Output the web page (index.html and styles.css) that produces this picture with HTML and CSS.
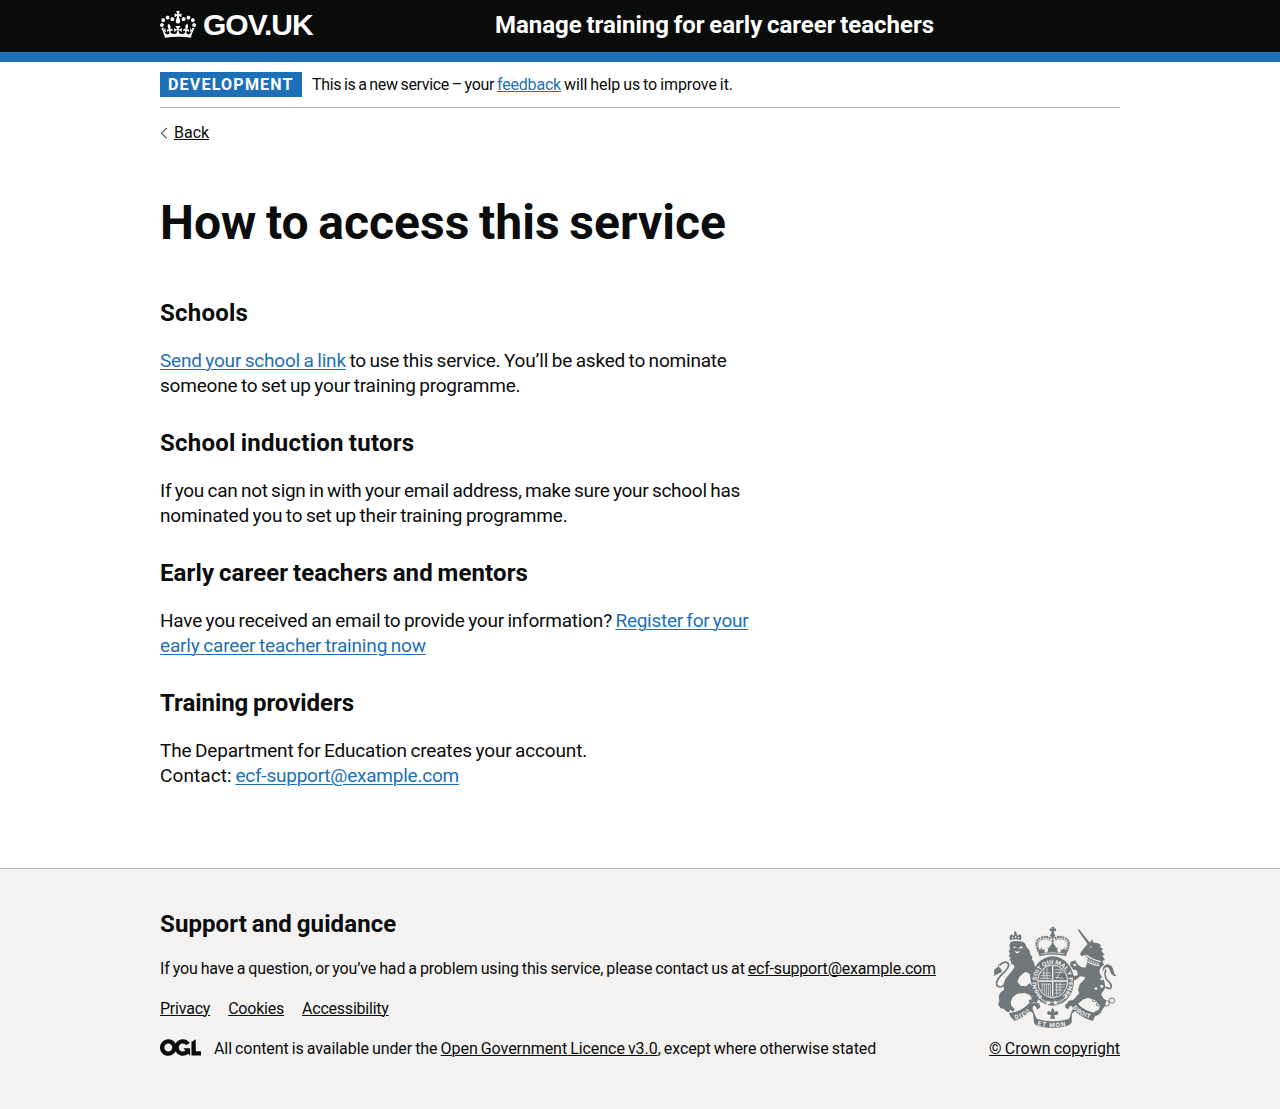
FILE: index.html
```html
<!DOCTYPE html>
<html lang="en">
<head>
<meta charset="utf-8">
<title>How to access this service</title>
<link rel="stylesheet" href="styles.css">
</head>
<body>
<header class="header">
  <div class="container header-inner">
    <a class="logo" href="#">
      <svg class="crown" viewBox="0 0 132 97" preserveAspectRatio="none" aria-hidden="true"><path fill="currentColor" fill-rule="evenodd" d="M25 30.2c3.5 1.5 7.7-.2 9.1-3.7 1.5-3.6-.2-7.8-3.9-9.2-3.6-1.4-7.6.3-9.1 3.9-1.4 3.5.3 7.5 3.9 9zM9 39.5c3.6 1.5 7.8-.2 9.2-3.7 1.5-3.6-.2-7.8-3.9-9.1-3.6-1.5-7.6.2-9.1 3.8-1.4 3.5.3 7.5 3.8 9zM4.4 57.2c3.5 1.5 7.7-.2 9.1-3.8 1.5-3.6-.2-7.7-3.9-9.1-3.5-1.5-7.6.3-9.1 3.8-1.4 3.5.3 7.6 3.9 9.1zm38.3-21.4c3.5 1.5 7.7-.2 9.1-3.8 1.5-3.6-.2-7.7-3.9-9.1-3.6-1.5-7.6.3-9.1 3.8-1.3 3.6.4 7.7 3.9 9.1zm64.4-5.6c-3.6 1.5-7.8-.2-9.1-3.7-1.5-3.6.2-7.8 3.8-9.2 3.6-1.4 7.7.3 9.2 3.9 1.3 3.5-.4 7.5-3.9 9zm15.9 9.3c-3.6 1.5-7.7-.2-9.1-3.7-1.5-3.6.2-7.8 3.7-9.1 3.6-1.5 7.7.2 9.2 3.8 1.5 3.5-.3 7.5-3.8 9zm4.7 17.7c-3.6 1.5-7.8-.2-9.2-3.8-1.5-3.6.2-7.7 3.9-9.1 3.6-1.5 7.7.3 9.2 3.8 1.3 3.5-.4 7.6-3.9 9.1zM89.3 35.8c-3.6 1.5-7.8-.2-9.2-3.8-1.4-3.6.2-7.7 3.9-9.1 3.6-1.5 7.7.3 9.2 3.8 1.4 3.6-.3 7.7-3.9 9.1zM69.7 17.7l8.9 4.7V9.3l-8.9 2.8c-.2-.3-.5-.6-.9-.9L72.4 0H59.6l3.5 11.2c-.3.3-.6.5-.9.9l-8.8-2.8v13.1l8.8-4.7c.3.3.6.7.9.9l-5 15.4v.1c-.2.8-.4 1.6-.4 2.4 0 4.1 3.1 7.5 7 8.1h.2c.3 0 .7.1 1 .1.4 0 .7 0 1-.1h.2c4-.6 7.1-4.1 7.1-8.1 0-.8-.1-1.7-.4-2.4V34l-5.1-15.4c.4-.2.7-.6 1-.9zM66 92.8c16.9 0 32.8 1.1 47.1 3.2 4-16.9 8.9-26.7 14-33.5l-9.6-3.4c1 4.9 1.1 7.2 0 10.2-1.5-1.4-3-4.3-4.2-8.7L108.6 76c2.8-2 5-3.2 7.5-3.3-4.4 9.4-10 11.9-13.6 11.2-4.3-.8-6.3-4.6-5.6-7.9 1-4.7 5.7-5.9 8-.5 4.3-8.7-3-11.4-7.6-8.8 7.1-7.2 7.9-13.5 2.1-21.1-8 6.1-8.1 12.3-4.5 20.8-4.7-5.4-12.1-2.5-9.5 6.2 3.4-5.2 7.9-2 7.2 3.1-.6 4.3-6.4 7.8-13.5 7.2-10.3-.9-10.9-8-11.2-13.8 2.5-.5 7.1 1.8 11 7.3L80.2 60c-4.1 4.4-8 5.3-12.3 5.4 1.4-4.4 8-11.6 8-11.6H55.5s6.4 7.2 7.9 11.6c-4.2-.1-8-1-12.3-5.4l1.4 16.4c3.9-5.5 8.5-7.7 10.9-7.3-.3 5.8-.9 12.8-11.1 13.8-7.2.6-12.9-2.9-13.5-7.2-.7-5 3.8-8.3 7.1-3.1 2.7-8.7-4.6-11.6-9.4-6.2 3.7-8.5 3.6-14.7-4.6-20.8-5.8 7.6-5 13.9 2.2 21.1-4.7-2.6-11.9.1-7.7 8.8 2.3-5.5 7.1-4.2 8.1.5.7 3.3-1.3 7.1-5.7 7.9-3.5.7-9-1.8-13.5-11.2 2.5.1 4.7 1.3 7.5 3.3l-4.7-15.4c-1.2 4.4-2.7 7.2-4.3 8.7-1.1-3-.9-5.3 0-10.2l-9.5 3.4c5 6.9 9.9 16.7 14 33.5 14.8-2.1 30.8-3.2 47.7-3.2z"/></svg>
      <span class="logo-text">GOV.UK</span>
    </a>
    <a class="service-name" href="#">Manage training for early career teachers</a>
  </div>
</header>

<div class="container page">
  <div class="phase-banner">
    <strong class="tag">DEVELOPMENT</strong>
    <span class="phase-text"><span class="phase-lead">This is a new service – your</span> <a href="#" class="snug">feedback</a> <span class="phase-end">will help us to improve it.</span></span>
  </div>
  <div class="back"><svg class="chevron" viewBox="0 0 8 12" aria-hidden="true"><path d="M6.8 1 1.6 6.2l5.2 5.2" fill="none" stroke="currentColor" stroke-width="1.2"/></svg><a href="#">Back</a></div>

  <main class="content">
    <h1>How to access this service</h1>

    <h2 class="wide">Schools</h2>
    <p><a href="#">Send your school a link</a> to use this service. You’ll be asked to nominate someone to set up your training programme.</p>

    <h2 class="wider">School induction tutors</h2>
    <p><span class="tight">If you can not sign in with your email address, make sure your school has</span> <span class="loose">nominated you to set up their training programme.</span></p>

    <h2>Early career teachers and mentors</h2>
    <p><span class="snug">Have you received an email to provide your information?</span> <a href="#" class="loose"><span class="tight">Register for your</span> early career teacher training now</a></p>

    <h2 class="narrow">Training providers</h2>
    <p class="loose">The Department for Education creates your account.<br><span class="open">Contact:</span> <a href="#" class="email">ecf-support@example.com</a></p>
  </main>
</div>

<footer class="footer">
  <div class="container footer-inner">
    <div class="footer-main">
      <h2>Support and guidance</h2>
      <p>If you have a question, or you’ve had a problem using this service, please contact us at <a href="#" class="snug">ecf-support@example.com</a></p>
      <ul class="footer-links">
        <li><a href="#">Privacy</a></li>
        <li><a href="#">Cookies</a></li>
        <li><a href="#">Accessibility</a></li>
      </ul>
      <div class="licence">
        <svg class="ogl" viewBox="0 0 483.2 195.7" aria-hidden="true"><path fill="currentColor" d="M421.5 142.8V.1l-50.7 32.3v161.1h112.4v-50.7zm-122.3-9.6A47.12 47.12 0 0 1 221 97.8c0-26 21.1-47.1 47.1-47.1 16.7 0 31.4 8.7 39.7 21.8l42.7-27.2A97.63 97.63 0 0 0 268.1 0c-36.5 0-68.3 20.1-85.1 49.7A98 98 0 0 0 97.8 0C43.9 0 0 43.9 0 97.8s43.9 97.8 97.8 97.8c36.5 0 68.3-20.1 85.1-49.7a97.76 97.76 0 0 0 149.6 25.4l19.4 22.2h3v-87.8h-80l24.3 27.5zM97.8 145c-26 0-47.1-21.1-47.1-47.1s21.1-47.1 47.1-47.1 47.1 21.1 47.1 47.1S123.8 145 97.8 145"/></svg>
        <span>All content is available under the <a href="#" class="licence-name">Open Government Licence v3.0</a>, except where otherwise stated</span>
      </div>
    </div>
    <div class="crown-copyright">
      <svg class="crest" viewBox="36 33 375 306" aria-hidden="true">
        <defs>
          <path id="motto-ring" d="M188 243A49 54 0 1 1 248 243"/>
          <path id="ribbon-left" d="M106 313Q134 309 160 282"/>
          <path id="ribbon-mid" d="M172 331Q218 343 268 330"/>
          <path id="ribbon-right" d="M277 279Q302 308 344 314"/>
        </defs>
        <!-- lion, with its crown and tail -->
        <g class="ink">
          <path d="M92 80Q108 75 130 81L136 87 140 97 148 105 151 118 157 126 156 134 162 141 163 150 168 158 176 166 170 178 162 186 163 196 170 204 168 218 160 212 152 198 150 178 138 170 128 176 118 186 112 200 122 212 138 214 150 204 160 222 170 238 176 252 170 264 160 262 150 268 146 256 156 252 150 240 134 234 112 236 98 246 92 262 94 272 104 282 100 290 90 284 88 292 80 290 72 282 62 280 54 268 58 258 56 244 62 232 72 224 70 210 76 192 86 180 96 168 104 156 98 146 92 148 94 138 88 136 92 128 86 124 90 116 86 108 91 102 88 92z"/>
          <path d="M44 178Q40 170 44 162L54 156 57 143 58 158Q68 162 64 172L52 178 38 184z"/>
          <path class="line w5" d="M59 150Q75 136 84 144 90 154 74 170 54 188 50 202 48 216 62 216L76 210"/>
          <path d="M90 76Q86 62 94 58L101 63Q101 54 106 54 112 54 112 62L120 58Q128 62 122 76 106 70 90 76z"/>
          <circle cx="106" cy="52" r="3.5"/>
        </g>
        <g class="bare"><path d="M100 94l10 4-9 1zM116 98l10-4 3 4-10 3zM104 107l8 3 8-3-6 8-5 0zM96 66h4v4h-4zM105 64h4v4h-4zM114 66h4v4h-4z"/></g>
        <!-- unicorn, with its collar, chain and tail -->
        <g class="ink">
          <path d="M293 44l4-1 34 42-7 4z"/>
          <path d="M322 88L331 81 336 73 341 83Q358 82 364 92L359 94 370 104 363 106 374 120 367 121 375 136 367 137 372 150 364 156Q356 164 360 176L368 190Q378 206 374 222L364 236Q366 248 378 256L376 272 368 282 362 294 350 302 338 300 344 290 356 284 360 272 346 256 324 248 308 254 294 266 276 272 262 266 265 258 280 254 298 234 294 224 300 206 312 194 316 186 300 184 286 196 272 194 266 182 278 178 284 184 294 180 290 166 280 164 270 150 272 140 286 136 292 148 304 156 316 158 320 148 322 128 314 120 304 124 300 116 308 104z"/>
          <path d="M410 184Q394 182 391 170 388 160 382 156 372 158 368 172 366 152 382 148 398 150 400 166 402 178 410 184z"/>
          <path class="line w5" d="M376 216Q392 226 394 214 394 206 382 196 370 182 378 164"/>
          <circle class="line w3" cx="343" cy="254" r="6"/><circle class="line w3" cx="354" cy="268" r="5"/>
          <circle class="line w3" cx="380" cy="265" r="8"/><circle class="line w3" cx="396" cy="257" r="8"/>
        </g>
        <path class="cut w4" d="M311 131Q330 148 358 152M318 120Q336 134 362 140"/>
        <path class="cut w4 dotted" d="M315 126Q333 141 358 146"/>
        <g class="bare"><circle cx="298" cy="140" r="4"/><circle cx="284" cy="150" r="4"/><circle cx="365" cy="192" r="4"/><circle cx="365" cy="214" r="5"/><circle cx="348" cy="221" r="4"/><path d="M328 96l8-2-4 5z"/></g>
        <!-- royal crown -->
        <g class="ink">
          <path d="M214 36h9l-1 6 6-2v9l-6-2 1 8h-9l1-8-6 2v-9l6 2z"/><circle cx="218" cy="61" r="7"/>
          <path class="line beads" d="M178 114Q159 79 181 69 200 62 212 70M258 114Q277 79 255 69 236 62 224 70"/>
          <path class="line w2" d="M181 112Q165 82 184 74 200 68 212 76M255 112Q271 82 252 74 236 68 224 76"/>
          <path class="line beads" d="M218 70v25"/>
          <path d="M178 124l-3-21 6 3 2-10 5 9 7-2-2 9 8 1 4-10-4-5 7 0 3-7 7-5 7 5 3 7 7 0-4 5 4 10 8-1-2-9 7 2 5-9 2 10 6-3-3 21q-40-11-80 0z"/>
        </g>
        <path class="cut w2" d="M182 117q36-8 72 0"/>
        <!-- shield and garter -->
        <ellipse class="ink" cx="218" cy="198" rx="64" ry="74"/>
        <ellipse class="cut w3" cx="218" cy="199" rx="45" ry="49"/>
        <path class="cut w4" d="M218 152v92M175 198h86"/>
        <path class="cut w2" d="M184 174h28M182 182h30M180 190h32M192 162v31M201 157v36M226 164h18M225 172h25M226 187l24 3M229 191l16-27M182 207h30M187 209v20M193 207v28M199 207v33M205 207v36M211 207v38M226 208h30M226 216h28M225 225h24M226 234h14M230 203v38M240 203v33"/>
        <path class="cut w2" d="M169 227q11 30 35 41M267 227q-11 30-35 41M174 246q42 33 88 0"/>
        <text class="motto ring"><textPath href="#motto-ring" textLength="258" lengthAdjust="spacingAndGlyphs">HONI SOIT QUI MAL Y PENSE</textPath></text>
        <path class="bare" d="M202 257l5 3 5-2-3 6 3 4-7-1-5 3v-6zM221 259l5-2 2 4 6-1-4 5 3 4-6-1-5 2 1-6z"/>
        <!-- motto ribbon -->
        <path class="ink" d="M92 306L87 294Q124 291 147 265L174 264Q184 270 179 279L171 283 166 272Q157 271 158 282L163 298 151 289Q131 307 104 318z"/>
        <path class="ink" d="M344 306L352 294Q314 291 292 265L262 264Q252 270 257 279L265 283 270 272Q279 271 278 282L273 298 285 289Q303 307 338 318z"/>
        <path class="ink" d="M158 286L171 312Q217 326 267 312L276 286 275 323Q269 331 258 334 218 344 177 334 165 331 162 324z"/>
        <text class="motto"><textPath href="#ribbon-left" textLength="50">DIEU</textPath></text>
        <text class="motto"><textPath href="#ribbon-mid" textLength="86">ET MON</textPath></text>
        <text class="motto"><textPath href="#ribbon-right" textLength="62">DROIT</textPath></text>
        <!-- fleur-de-lis -->
        <path class="ink" d="M218 278q8 9 3 19 3-10 10-9 6 4 2 10-2 3-6 2l-5 1 4 10h-16l4-10-5-1q-4 1-6-2-4-6 2-10 7-1 10 9-5-10 3-19z"/>
      </svg>
      <a href="#">© Crown copyright</a>
    </div>
  </div>
</footer>
</body>
</html>
```
FILE: styles.css
```css
* { box-sizing: border-box; word-spacing: -.05em; }

body {
  margin: 0;
  background: #fff;
  color: #0b0c0c;
  font-family: Roboto, "Liberation Sans", sans-serif;
  font-size: 16px;
  line-height: 20px;
}

h1, h2, p, ul { margin: 0; padding: 0; }
a { color: #1d70b8; text-decoration: underline; text-decoration-thickness: 1px; text-underline-offset: 1px; }

.container { width: 960px; margin: 0 auto; }
.page { padding-bottom: 80px; }

.header { background: #0b0c0c; border-bottom: 10px solid #1d70b8; color: #fff; }
.header-inner { display: flex; height: 52px; }
.logo { display: flex; width: 335px; padding-top: 11px; color: #fff; text-decoration: none; }
.crown { width: 36px; height: 27px; }
.logo-text { margin-left: 7px; font: bold 30px/28px "Liberation Sans", Arial, sans-serif; letter-spacing: -1px; }
.service-name { padding-top: 10px; color: #fff; font-size: 24px; line-height: 30px; font-weight: bold; letter-spacing: -.02px; text-decoration: none; }

.phase-banner { display: flex; height: 46px; padding: 10px 0; border-bottom: 1px solid #b1b4b6; }
.tag { width: 142px; height: 25px; padding-left: 8px; background: #1d70b8; color: #fff; line-height: 25px; letter-spacing: 1.22px; }
.phase-text { margin-left: 10px; line-height: 25px; letter-spacing: -.2px; }
.phase-lead { letter-spacing: -.35px; }
.phase-end { letter-spacing: -.1px; }

.back { display: flex; height: 20px; margin-top: 15px; }
.back a { color: #0b0c0c; }
.chevron { width: 8px; height: 12px; margin: 4px 6px 0 0; color: #505a5f; }

.content { width: 610px; padding-top: 55px; }
.content a { text-underline-offset: 2px; }
h1 { margin-bottom: 50px; font-size: 48px; line-height: 50px; letter-spacing: .04px; }
h2 { margin-bottom: 20px; font-size: 24px; line-height: 30px; letter-spacing: .1px; }
h2.wide { letter-spacing: .22px; }
h2.wider { letter-spacing: .26px; }
h2.narrow { letter-spacing: -.045px; }
.content p { font-size: 19px; line-height: 25px; letter-spacing: -.2px; }
.content p + h2 { margin-top: 30px; }
.snug { letter-spacing: -.2px; }
.content .snug { letter-spacing: -.22px; }
.tight { letter-spacing: -.28px; }
.email { letter-spacing: -.23px; }
.loose, .content p.loose { letter-spacing: -.165px; }
.open { letter-spacing: .1px; }

.footer { height: 241px; padding-top: 40px; border-top: 1px solid #b1b4b6; background: #f3f2f1; }
.footer a { color: #0b0c0c; }
.footer-inner { display: flex; justify-content: space-between; }
.footer-main p { letter-spacing: -.14px; }
.footer-links { display: flex; gap: 18px; margin: 20px 0; list-style: none; letter-spacing: -.22px; }
.licence { display: flex; letter-spacing: -.08px; }
.licence-name { letter-spacing: -.06px; }
.ogl { width: 41px; height: 17px; margin-right: 13px; }

.crown-copyright { display: flex; flex-direction: column; align-items: center; padding-top: 17px; }
.crest { width: 125px; height: 102px; margin: 0 0 11px; }
.ink { fill: #6f777b; }
.bare { fill: #f3f2f1; }
.line { fill: none; stroke: #6f777b; }
.cut { fill: none; stroke: #f3f2f1; }
.w2 { stroke-width: 2; }
.w3 { stroke-width: 3; }
.w4 { stroke-width: 4; }
.w5 { stroke-width: 5; }
.dotted { stroke-dasharray: 4 3; }
.beads { stroke-width: 7; stroke-linecap: round; stroke-dasharray: 0 8; }
.motto { fill: #f3f2f1; font: bold 19px Roboto, sans-serif; word-spacing: 0; }
.ring { font-size: 17px; }
```
